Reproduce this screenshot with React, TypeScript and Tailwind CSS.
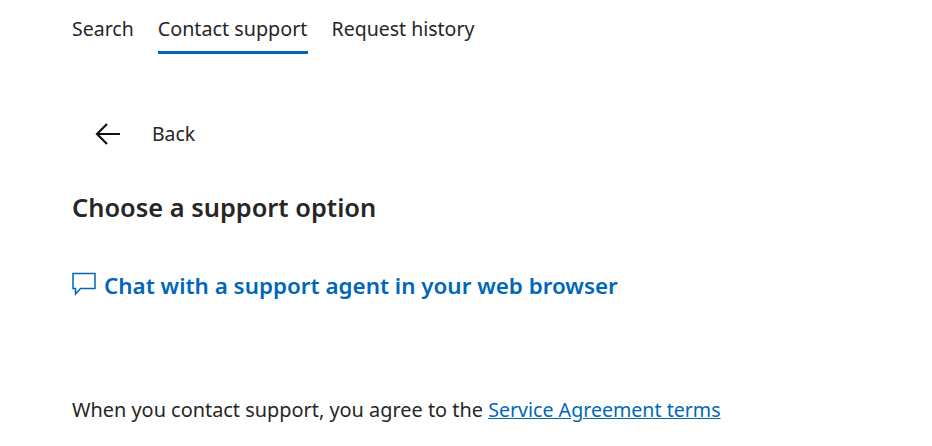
import React from "react";

const App = () => {
  return (
    <div className="w-[932px] h-[446px] bg-white overflow-hidden pl-[72px] font-['Noto_Sans',sans-serif] text-[#262626]">
      <div className="flex gap-6 h-[54px] text-[19.5px]">
        <div className="pt-[14px] leading-[30px]">Search</div>
        <div className="pt-[14px] text-[19.75px] leading-[30px] border-b-[3px] border-[#0067b8] h-[54px]">Contact support</div>
        <div className="pt-[14px] leading-[30px]">Request history</div>
      </div>
      <div className="flex items-center mt-[65px] pl-[23px] h-[30px]">
        <svg width="26" height="24" viewBox="0 0 26 24" fill="none" stroke="#111" strokeWidth="2.2">
          <path d="M25 12H2M12 2L2 12l10 10" />
        </svg>
        <span className="ml-[31px] text-[19.4px] leading-[30px]">Back</span>
      </div>
      <h2 className="mt-[40px] text-[25.4px] leading-[36px] font-semibold">Choose a support option</h2>
      <div className="flex items-center mt-[43px] h-[36px]">
        <svg width="24" height="24" viewBox="0 0 24 24" fill="none" stroke="#0067b8" strokeWidth="1.5" className="-mt-[5px]">
          <path d="M1 1.5h22v15H8.5L3.5 22v-5.5H1z" />
        </svg>
        <span className="ml-[8px] text-[22.4px] leading-[36px] font-semibold text-[#0067b8]">Chat with a support agent in your web browser</span>
      </div>
      <p className="mt-[91px] text-[19.9px] leading-[30px]">
        When you contact support, you agree to the <a className="underline text-[19.6px] text-[#0067b8]">Service Agreement terms</a>
      </p>
    </div>
  );
};

export default App;
